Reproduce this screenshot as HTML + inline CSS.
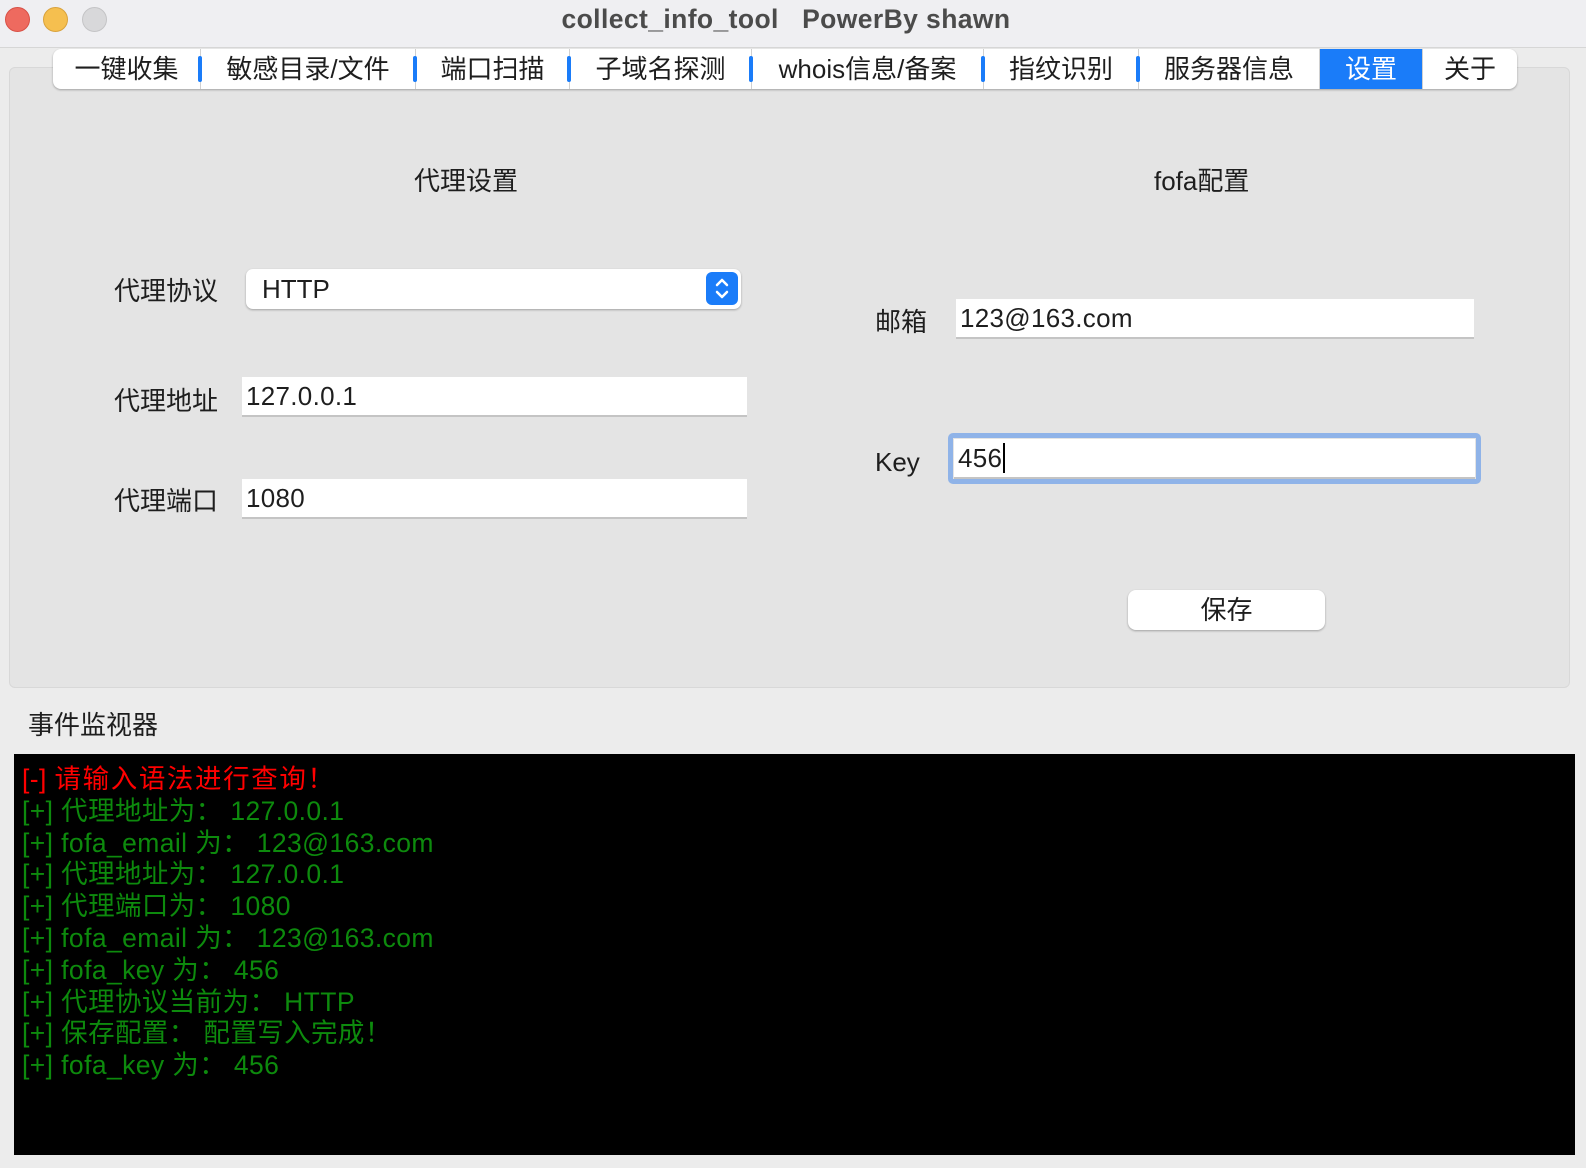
<!DOCTYPE html>
<html><head><meta charset="utf-8"><style>
*{margin:0;padding:0;box-sizing:border-box}
body{width:1586px;height:1168px;background:#ececec;font-family:"Liberation Sans","Noto Sans CJK SC",sans-serif;position:relative;overflow:hidden;color:#1e1e1e}
.a{position:absolute;white-space:nowrap}
.title{left:0;top:0;width:1586px;height:48px;background:#efeff2;border-bottom:1px solid #d6d6d6}
.dot{position:absolute;top:7px;width:25px;height:25px;border-radius:50%}
.tabs{left:53px;top:49px;width:1464px;height:40px;background:#fff;border-radius:8px;box-shadow:0 1px 2px rgba(0,0,0,.3);display:flex;overflow:hidden}
.tab{height:40px;font-size:26px;line-height:40px;text-align:center;border-right:1px solid #d0d0d0;position:relative}
.tab.b::after{content:"";position:absolute;right:-2px;top:7px;width:4px;height:26px;background:#1a7cf9;border-radius:2px}
.sel{background:#1a7cf9;color:#fff}
.panel{left:9px;top:67px;width:1561px;height:621px;background:#e4e4e4;border:1px solid #d8d8d8;border-radius:6px}
.lbl{font-size:26px;line-height:30px}
.inp{background:#fff;border-bottom:2px solid #c4c4c4;font-size:26px;line-height:38px;padding-left:4px;letter-spacing:0.3px}
.log{left:14px;top:754px;width:1561px;height:401px;background:#000;padding:10px 0 0 8px;font-size:26.5px;line-height:31.8px;color:#0d8a0d;letter-spacing:0.4px}
.log .c{letter-spacing:1.6px}
</style></head><body>
<div class="a title">
<div class="dot" style="left:5px;background:#ee6a5f;border:1px solid #d85046"></div>
<div class="dot" style="left:43px;background:#f5bf4f;border:1px solid #d9a23c"></div>
<div class="dot" style="left:82px;background:#d8d8da;border:1px solid #c4c4c6"></div>
<div class="a" style="left:0;width:1572px;text-align:center;top:4px;font-size:26.5px;font-weight:bold;color:#4b4b4b;letter-spacing:0.4px">collect_info_tool&nbsp;&nbsp;&nbsp;PowerBy shawn</div>
</div>
<div class="a panel"></div>
<div class="a tabs">
<div class="tab b" style="width:148px">一键收集</div>
<div class="tab b" style="width:215px">敏感目录/文件</div>
<div class="tab b" style="width:154px">端口扫描</div>
<div class="tab b" style="width:182px">子域名探测</div>
<div class="tab b" style="width:232px">whois信息/备案</div>
<div class="tab b" style="width:155px">指纹识别</div>
<div class="tab" style="width:181px">服务器信息</div>
<div class="tab sel" style="width:103px">设置</div>
<div class="tab" style="width:94px;border:none">关于</div>
</div>
<div class="a lbl" style="left:414px;top:166px">代理设置</div>
<div class="a lbl" style="left:1154px;top:166px">fofa配置</div>
<div class="a lbl" style="left:114px;top:276px">代理协议</div>
<div class="a" style="left:246px;top:269px;width:495px;height:40px;background:#fff;border-radius:7px;box-shadow:0 1px 2px rgba(0,0,0,.3);font-size:26px;line-height:40px;padding-left:16px">HTTP
<div class="a" style="left:460px;top:3px;width:32px;height:33px;background:#1a7cf9;border-radius:6px">
<svg width="32" height="33" viewBox="0 0 32 33"><path d="M11 13l5-5 5 5M11 20l5 5 5-5" stroke="#fff" stroke-width="2.5" fill="none" stroke-linecap="round" stroke-linejoin="round"/></svg></div></div>
<div class="a lbl" style="left:114px;top:386px">代理地址</div>
<div class="a inp" style="left:242px;top:377px;width:505px;height:40px">127.0.0.1</div>
<div class="a lbl" style="left:114px;top:486px">代理端口</div>
<div class="a inp" style="left:242px;top:479px;width:505px;height:40px">1080</div>
<div class="a lbl" style="left:875px;top:307px">邮箱</div>
<div class="a inp" style="left:956px;top:299px;width:518px;height:40px">123@163.com</div>
<div class="a lbl" style="left:875px;top:447px">Key</div>
<div class="a" style="left:948px;top:433px;width:533px;height:51px;border:5px solid #8fb3e8;border-radius:5px"></div>
<div class="a inp" style="left:954px;top:439px;width:521px;height:40px">456<span style="border-left:2px solid #000;margin-left:1px"></span></div>
<div class="a" style="left:1128px;top:590px;width:197px;height:40px;background:#fff;border-radius:8px;box-shadow:0 1px 2px rgba(0,0,0,.3);text-align:center;font-size:26px;line-height:40px">保存</div>
<div class="a lbl" style="left:28px;top:710px">事件监视器</div>
<div class="a log">
<div style="color:#f00">[-] <span class="c">请输入语法进行查询！</span></div>
<div>[+] 代理地址为： 127.0.0.1</div>
<div>[+] fofa_email 为： 123@163.com</div>
<div>[+] 代理地址为： 127.0.0.1</div>
<div>[+] 代理端口为： 1080</div>
<div>[+] fofa_email 为： 123@163.com</div>
<div>[+] fofa_key 为： 456</div>
<div>[+] 代理协议当前为： HTTP</div>
<div>[+] 保存配置： 配置写入完成！</div>
<div>[+] fofa_key 为： 456</div>
</div>
</body></html>
